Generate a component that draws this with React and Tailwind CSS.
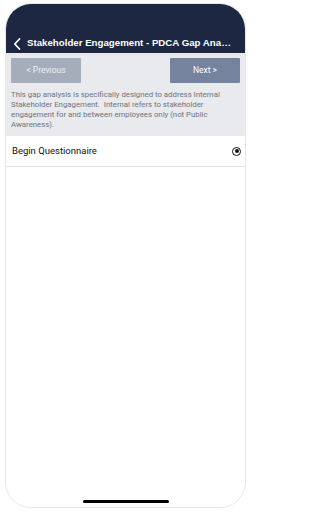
import { useState } from 'react';

const ChevronLeft = () => (
  <svg width="8" height="12" viewBox="0 0 8 12" fill="none">
    <path d="M6.5 1L1.8 6l4.7 5" stroke="white" strokeWidth="1.8" strokeLinecap="round" strokeLinejoin="round" />
  </svg>
);

const App = () => {
  const [selected, setSelected] = useState(true);

  return (
    <div className="w-[252px] h-[512px] bg-white pt-[3px] pl-[5px] pr-[6px] pb-[4px]">
      <div className="h-full flex flex-col rounded-[26px] border border-[#e6e7ea] overflow-hidden bg-white">
        {/* header */}
        <div className="bg-[#1d2742] h-[49px] pt-[32px] pl-[7px] pr-[12px] flex items-start gap-[6px]">
          <div className="h-[14px] flex items-center pt-[1px]">
            <ChevronLeft />
          </div>
          <div className="text-white font-bold text-[9.7px] leading-[14px] truncate" style={{ fontFamily: '"Liberation Sans", Arial, sans-serif' }}>
            Stakeholder Engagement - PDCA Gap Analysis
          </div>
        </div>

        {/* intro */}
        <div className="bg-[#e9eaed] px-[5px] pt-[5px] pb-[6px] font-['Roboto',sans-serif]">
          <div className="flex justify-between">
            <button className="w-[70px] h-[25px] bg-[#a5adbb] text-[#eef0f3] text-[8.5px] rounded-[1px]">
              &lt; Previous
            </button>
            <button className="w-[70px] h-[25px] bg-[#76839e] text-white text-[8.5px] rounded-[1px]">
              Next &gt;
            </button>
          </div>
          <p className="mt-[7px] text-[7.8px] leading-[10px] text-[#6d737e]">
            This gap analysis is specifically designed to address Internal Stakeholder Engagement.&nbsp; Internal refers to stakeholder engagement for and between employees only (not Public Awareness).
          </p>
        </div>

        {/* questionnaire row */}
        <div
          className="h-[31px] flex items-center justify-between pl-[6px] pr-[4px] border-b border-[#e2e3e6] font-['Roboto',sans-serif] cursor-pointer"
          onClick={() => setSelected(!selected)}
        >
          <span className="text-[9.5px] text-[#111]">Begin Questionnaire</span>
          <span className="w-[9px] h-[9px] rounded-full border-[1.5px] border-[#111] flex items-center justify-center">
            {selected && <span className="w-[4px] h-[4px] rounded-full bg-[#111]" />}
          </span>
        </div>

        <div className="flex-1" />

        {/* home indicator */}
        <div className="flex justify-center pb-[4px]">
          <div className="w-[86px] h-[3px] rounded-full bg-black" />
        </div>
      </div>
    </div>
  );
};

export default App;
